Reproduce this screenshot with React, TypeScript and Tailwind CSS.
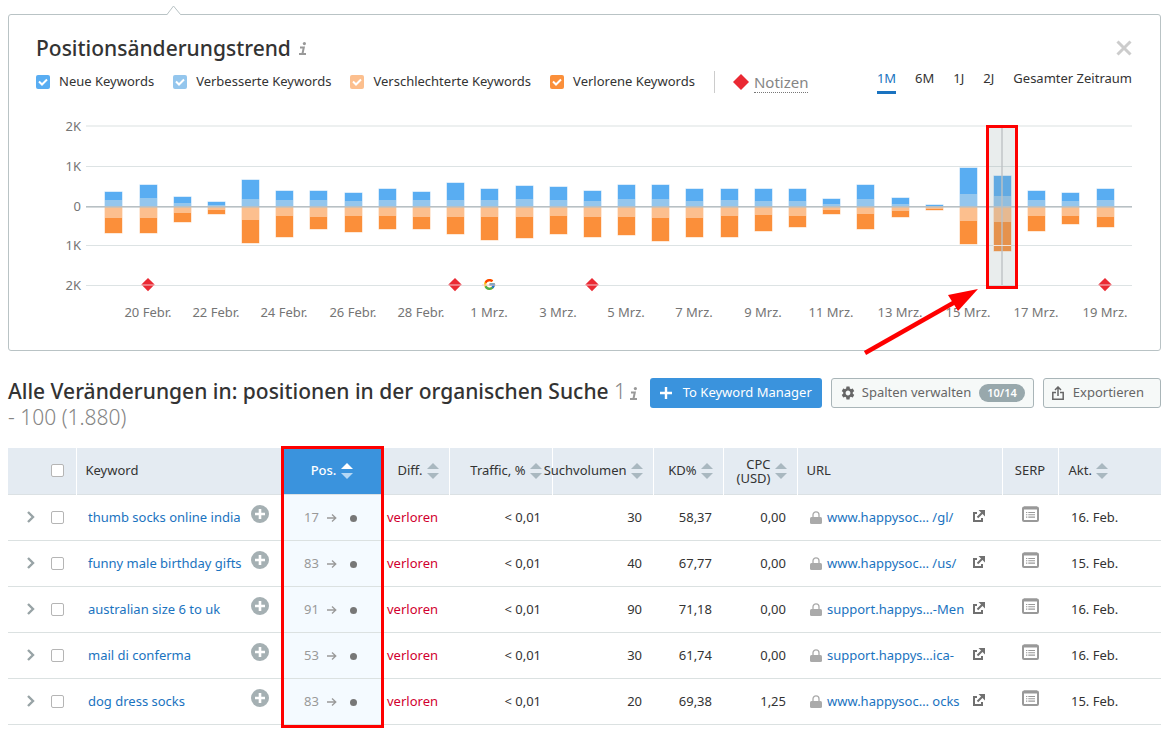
import { Fragment } from 'react';
import { MdSettings } from 'react-icons/md';
import { FcGoogle } from 'react-icons/fc';

type Bar = [number, number, number, number];

// Pixel heights measured from the zero line: new+improved, improved, declined, declined+lost.
const BARS: Bar[] = [
  [14, 6, 12, 27], [21, 8, 12, 27], [9, 3, 7, 16], [4, 1, 4, 8], [26, 7, 14, 37],
  [15, 6, 10, 31], [15, 6, 11, 23], [13, 5, 10, 26], [17, 6, 10, 23], [14, 6, 11, 23],
  [23, 6, 11, 28], [17, 6, 11, 34], [20, 7, 11, 32], [19, 6, 10, 28], [15, 5, 11, 31],
  [21, 7, 11, 29], [21, 7, 12, 35], [17, 5, 12, 31], [17, 6, 10, 31], [17, 5, 9, 25],
  [17, 5, 10, 21], [7, 2, 4, 8], [21, 7, 8, 23], [8, 2, 5, 11], [1, 0, 3, 4],
  [38, 12, 15, 38], [30, 10, 16, 45], [15, 6, 10, 25], [13, 5, 10, 18], [17, 6, 11, 21],
];

const DATES = [
  '20 Febr.', '22 Febr.', '24 Febr.', '26 Febr.', '28 Febr.', '1 Mrz.', '3 Mrz.', '5 Mrz.',
  '7 Mrz.', '9 Mrz.', '11 Mrz.', '13 Mrz.', '15 Mrz.', '17 Mrz.', '19 Mrz.',
];

const GRID: [string, number][] = [['2K', 126], ['1K', 166], ['0', 206], ['1K', 245], ['2K', 285]];

const LEGEND = [
  { id: 'neu', label: 'Neue Keywords', color: 'bg-[#59adf2]' },
  { id: 'verbessert', label: 'Verbesserte Keywords', color: 'bg-[#94c6ed]' },
  { id: 'verschlechtert', label: 'Verschlechterte Keywords', color: 'bg-[#fcbf8e]' },
  { id: 'verloren', label: 'Verlorene Keywords', color: 'bg-[#fb8f3a]' },
];

const ROWS = [
  { kw: 'thumb socks online india', pos: 17, vol: '30', kd: '58,37', cpc: '0,00', url: 'www.happysoc… /gl/', date: '16. Feb.' },
  { kw: 'funny male birthday gifts', pos: 83, vol: '40', kd: '67,77', cpc: '0,00', url: 'www.happysoc… /us/', date: '15. Feb.' },
  { kw: 'australian size 6 to uk', pos: 91, vol: '90', kd: '71,18', cpc: '0,00', url: 'support.happys…-Men', date: '16. Feb.' },
  { kw: 'mail di conferma', pos: 53, vol: '30', kd: '61,74', cpc: '0,00', url: 'support.happys…ica-', date: '16. Feb.' },
  { kw: 'dog dress socks', pos: 83, vol: '20', kd: '69,38', cpc: '1,25', url: 'www.happysoc… ocks', date: '15. Feb.' },
];

const center = (i: number) => Math.round(113.4 + i * 34.18);

function Info() {
  return (
    <svg className="h-[13px] w-2 shrink-0" viewBox="0 0 8 13" fill="none" stroke="#999" strokeWidth="2">
      <circle cx="5.4" cy="1.6" r="1.6" fill="#999" stroke="none" />
      <path d="M1 5.5h3.8L3.4 12M0 12h7" />
    </svg>
  );
}

function Sort({ active = false }: { active?: boolean }) {
  return (
    <svg className="h-4 w-3 shrink-0" viewBox="0 0 12 16">
      <path d="M6 0l6 6H0z" fill={active ? '#fff' : '#a9b8c0'} />
      <path d="M0 10h12l-6 6z" fill={active ? '#b5d8f5' : '#a9b8c0'} />
    </svg>
  );
}

function Chart() {
  return (
    <svg className="mt-4 block w-full overflow-visible" viewBox="36 110 1096 220" fontSize="13" fill="#757575">
      {GRID.map(([label, y]) => (
        <Fragment key={y}>
          <rect x="86" y={y - (y === 126 ? 1 : 0)} width="1046" height={y === 126 ? 2 : 1} fill={y === 126 ? '#edf0f0' : '#dde3e4'} />
          <text x="81" y={y + 5} textAnchor="end">{label}</text>
        </Fragment>
      ))}
      {BARS.map(([up, upLow, downLow, down], i) => {
        const x = center(i) - 8;
        return (
          <g key={i}>
            <rect x={x - 0.5} y={206 - up - 0.5} width="18" height={up + 0.5} fill="#b5d9f8" />
            <rect x={x} y={206 - up} width="17" height={up} fill="#59adf2" />
            <rect x={x} y={206 - upLow} width="17" height={upLow} fill="#94c6ed" />
            <rect x={x - 0.5} y={206} width="18" height={down + 0.5} fill="#fdd3b2" />
            <rect x={x} y={206} width="17" height={down} fill="#fb8f3a" />
            <rect x={x} y={206} width="17" height={downLow} fill="#fcbf8e" />
          </g>
        );
      })}
      <rect x="989" y="128" width="27" height="158" fill="#8b9d9f" opacity="0.19" />
      <rect x="1001" y="128" width="2" height="157" fill="#bdc2c4" opacity="0.7" />
      <rect x="993" y="245" width="18" height="1" fill="#f0e4da" />
      <rect x="86" y="206" width="1046" height="1.6" fill="#b8c0c4" />
      {[1, 10, 14, 29].map((i) => (
        <path key={i} d={`M${center(i)} 278l6.6 6.6-6.6 6.6-6.6-6.6z`} fill="#ea2933" />
      ))}
      <FcGoogle x="483" y="278" width="13" height="13" />
      {[1, 10, 11, 14, 29].map((i) => (
        <rect key={i} x={center(i) - 7} y="284.5" width="14" height="1" fill="#f3c9cd" />
      ))}
      {DATES.map((d, i) => (
        <text key={d} x={center(1 + i * 2)} y="317" textAnchor="middle">{d}</text>
      ))}
      <rect x="987.5" y="126.5" width="29" height="161" fill="none" stroke="#fe0000" strokeWidth="3" />
      <path d="M865 353L955 302" stroke="#fe0000" strokeWidth="4.4" />
      <path d="M978 289L948 295l10 16z" fill="#fe0000" />
    </svg>
  );
}

const BOX =
  'block size-[13px] shrink-0 appearance-none rounded-[2px] border border-[#b5b5b5] bg-white checked:bg-[#3a93dd]';
const TH = 'border-r border-white font-normal';

export default function App() {
  return (
    <main className="bg-white px-2 pt-[14px] pb-2 font-['Noto_Sans',sans-serif] text-[13px] text-[#333]">
      <section className="relative rounded-[3px] border border-[#b9c3c5] pr-7 pb-5 pl-[27px]">
        <svg className="absolute -top-[10px] left-[157px] h-[11px] w-4" viewBox="0 0 16 11">
          <path d="M1 10L7.5 .8 15 10v1H1z" fill="#fff" />
          <path d="M0 9.5h1L7.5 1l7 8.5H16" fill="none" stroke="#b9c3c5" />
        </svg>
        <div className="flex items-center justify-between pt-[19px]">
          <h2 className="flex items-center gap-2 text-[21px] leading-7 font-medium">
            Positionsänderungstrend <Info />
          </h2>
          <button aria-label="Schließen">
            <svg className="size-4" viewBox="0 0 16 16" stroke="#ccc" strokeWidth="3">
              <path d="M1.5 1.5l13 13M14.500 1.500l-13 13" />
            </svg>
          </button>
        </div>
        <div className="mt-2 flex h-6 items-center">
          <div className="flex items-center gap-[19px]">
            {LEGEND.map((l) => (
              <label key={l.id} className="flex items-center gap-[9px] whitespace-nowrap">
                <span className="grid size-[14px]">
                  <input type="checkbox" defaultChecked className={`col-start-1 row-start-1 size-[14px] appearance-none rounded-[2px] ${l.color}`} />
                  <svg className="pointer-events-none col-start-1 row-start-1 size-[14px]" viewBox="0 0 14 14" fill="none" stroke="#fff" strokeWidth="2">
                    <path d="M3 6.500l3 3 5-5" />
                  </svg>
                </span>
                {l.label}
              </label>
            ))}
          </div>
          <span className="ml-[19px] h-[22px] w-px bg-[#ccc]" />
          <button className="ml-[18px] flex items-center gap-[5px] text-[15px] leading-5 text-[#858585]">
            <svg className="size-4" viewBox="0 0 16 16"><path d="M8 0l8 8-8 8-8-8z" fill="#ea2933" /></svg>
            <span className="border-b border-dotted border-[#777]">Notizen</span>
          </button>
          <div className="ml-auto flex items-start gap-[19px] self-start leading-[17px] whitespace-nowrap">
            <button className="border-b-3 border-[#1a73c0] pb-1 text-[#1a73c0]">1M</button>
            <button>6M</button>
            <button>1J</button>
            <button>2J</button>
            <button>Gesamter Zeitraum</button>
          </div>
        </div>
        <Chart />
      </section>

      <div className="mt-[27px] flex items-start pb-[18px]">
        <h2 className="min-w-0 flex-1 text-[21px] leading-[26px] font-medium">
          Alle Veränderungen in: positionen in der organischen Suche{' '}
          <span className="font-light text-[#858585]">1 - 100 (1.880)</span>
        </h2>
        <span className="flex h-[30px] items-center pr-3"><Info /></span>
        <div className="flex gap-[9px] whitespace-nowrap">
          <button className="flex h-[30px] items-center gap-[11px] rounded-[3px] bg-[#3a93dd] px-[10px] text-white">
            <svg className="size-3" viewBox="0 0 12 12" stroke="#fff" strokeWidth="2.400"><path d="M6 0v12M0 6h12" /></svg>
            To Keyword Manager
          </button>
          <button className="flex h-[30px] items-center rounded-[3px] border border-[#a9b5b8] bg-[#f6f9f8] px-2 text-[#666]">
            <MdSettings className="mr-[6px] size-4" />
            Spalten verwalten
            <span className="ml-2 rounded-full bg-[#98a8ac] px-2 text-[11px] leading-[18px] font-semibold text-white">10/14</span>
          </button>
          <button className="flex h-[30px] items-center gap-[9px] rounded-[3px] border border-[#a9b5b8] bg-[#f6f9f8] pr-4 pl-2 text-[#666]">
            <svg className="h-[14px] w-3" viewBox="0 0 12 14" fill="none" stroke="#666" strokeWidth="1.500">
              <path d="M4 6.500H.8v6.700h10.400V6.500H8M6 10V2M3 4l3-3 3 3" />
            </svg>
            Exportieren
          </button>
        </div>
      </div>

      <div className="relative">
        <table className="w-full table-fixed border-collapse">
          <colgroup>
            <col className="w-[68px]" />
            <col className="w-[206px]" />
            <col className="w-[100px]" />
            <col className="w-[67px]" />
            <col className="w-[103px]" />
            <col className="w-[101px]" />
            <col className="w-[70px]" />
            <col className="w-[74px]" />
            <col />
            <col className="w-[56px]" />
            <col className="w-[103px]" />
          </colgroup>
          <thead>
            <tr className="h-[46px] border-b border-[#dbe1e4] bg-[#e4ebf2] whitespace-nowrap">
              <th className={TH}><input type="checkbox" aria-label="Alle auswählen" className={`${BOX} ml-[43px]`} /></th>
              <th className="pl-[9px] text-left font-normal">Keyword</th>
              <th className="bg-[#3a93dd] font-medium text-white">
                <button className="mx-auto flex items-center gap-[5px]">Pos. <Sort active /></button>
              </th>
              <th className={TH}><button className="ml-auto flex items-center gap-1 pr-[10px]">Diff. <Sort /></button></th>
              <th className={TH}><button className="ml-auto flex items-center gap-1 pr-[10px]">Traffic, % <Sort /></button></th>
              <th className={TH}>
                <div className="flex justify-end"><button className="flex shrink-0 items-center gap-1 pr-[10px]">Suchvolumen <Sort /></button></div>
              </th>
              <th className={TH}><button className="ml-auto flex items-center gap-1 pr-[10px]">KD% <Sort /></button></th>
              <th className={TH}>
                <button className="ml-auto flex items-center gap-1 pr-[10px] text-right leading-[14px]">
                  <span>CPC<br />(USD)</span> <Sort />
                </button>
              </th>
              <th className={`${TH} pl-[9px] text-left`}>URL</th>
              <th className={`${TH} text-center`}>SERP</th>
              <th className="font-normal"><button className="flex items-center gap-1 pl-[10px]">Akt. <Sort /></button></th>
            </tr>
          </thead>
          <tbody>
            {ROWS.map((r) => (
              <tr key={r.kw} className="h-[46px] border-b border-[#dbe1e1] whitespace-nowrap [&>td]:pt-[2px]">
                <td>
                  <div className="flex items-center gap-4 pb-[2px] pl-[19px]">
                    <button aria-label="Aufklappen">
                      <svg className="block h-3 w-2" viewBox="0 0 8 12" fill="none" stroke="#98a3a6" strokeWidth="2.400"><path d="M1 1l5 5-5 5" /></svg>
                    </button>
                    <input type="checkbox" aria-label={r.kw} className={BOX} />
                  </div>
                </td>
                <td>
                  <div className="flex items-center justify-between pr-[13px] pl-3">
                    <a href="#" className="text-[#1a73c0]">{r.kw}</a>
                    <button aria-label="Hinzufügen" className="pb-2">
                      <svg className="block size-[18px]" viewBox="0 0 18 18">
                        <circle cx="9" cy="9" r="9" fill="#a5b0b3" />
                        <path d="M9 4v10M4 9h10" stroke="#fff" strokeWidth="2.600" />
                      </svg>
                    </button>
                  </div>
                </td>
                <td className="bg-[#f4faff]">
                  <div className="flex items-center pl-[22px] text-[#999]">
                    {r.pos}
                    <svg className="ml-2 h-[10px] w-[10px]" viewBox="0 0 10 10" fill="none" stroke="#999" strokeWidth="1.300"><path d="M0 5h9M5 1.500L8.800 5 5 8.500" /></svg>
                    <span className="ml-[13px] size-[7px] rounded-full bg-[#777]" />
                  </div>
                </td>
                <td className="pl-[5px] text-[#d1002f]">verloren</td>
                <td className="pr-[11px] text-right">&lt; 0,01</td>
                <td className="pr-[11px] text-right">{r.vol}</td>
                <td className="pr-[11px] text-right">{r.kd}</td>
                <td className="pr-[11px] text-right">{r.cpc}</td>
                <td>
                  <div className="flex items-center pr-[17px] pl-[13px]">
                    <svg className="mr-[5px] mb-[2px] h-[13px] w-3 shrink-0" viewBox="0 0 12 13">
                      <path d="M3 6V3.800a3 3 0 0 1 6 0V6" fill="none" stroke="#aaa" strokeWidth="1.300" />
                      <rect y="6" width="12" height="7" rx="1.500" fill="#aaa" />
                    </svg>
                    <a href="#" className="text-[#1a73c0]">{r.url}</a>
                    <button aria-label="Seite öffnen" className="ml-auto pb-1">
                      <svg className="block size-3" viewBox="0 0 12 12" fill="none" stroke="#707070" strokeWidth="2">
                        <path d="M4 3H1v8h8V8M4.500 7.500l5-5" />
                        <path d="M5.500 0H12v6.500z" fill="#707070" stroke="none" />
                      </svg>
                    </button>
                  </div>
                </td>
                <td>
                  <button aria-label="SERP anzeigen" className="mx-auto block pb-2">
                    <svg className="block h-4 w-[17px]" viewBox="0 0 17 16" fill="none" stroke="#999">
                      <rect x="1" y="1.500" width="15" height="13.500" rx="1" strokeWidth="2" />
                      <path d="M2 2h13" strokeWidth="3" />
                      <path d="M4 6.500h1.300M6.300 6.500H13M4 8.800h1.300M6.300 8.800H13M4 11.100h1.300M6.300 11.100H13" strokeWidth="1.100" />
                    </svg>
                  </button>
                </td>
                <td className="pl-[13px]">{r.date}</td>
              </tr>
            ))}
          </tbody>
        </table>
        <div className="pointer-events-none absolute -top-[2px] -bottom-[3px] left-[273px] w-[103px] border-3 border-[#fe0000]" />
      </div>
    </main>
  );
}
